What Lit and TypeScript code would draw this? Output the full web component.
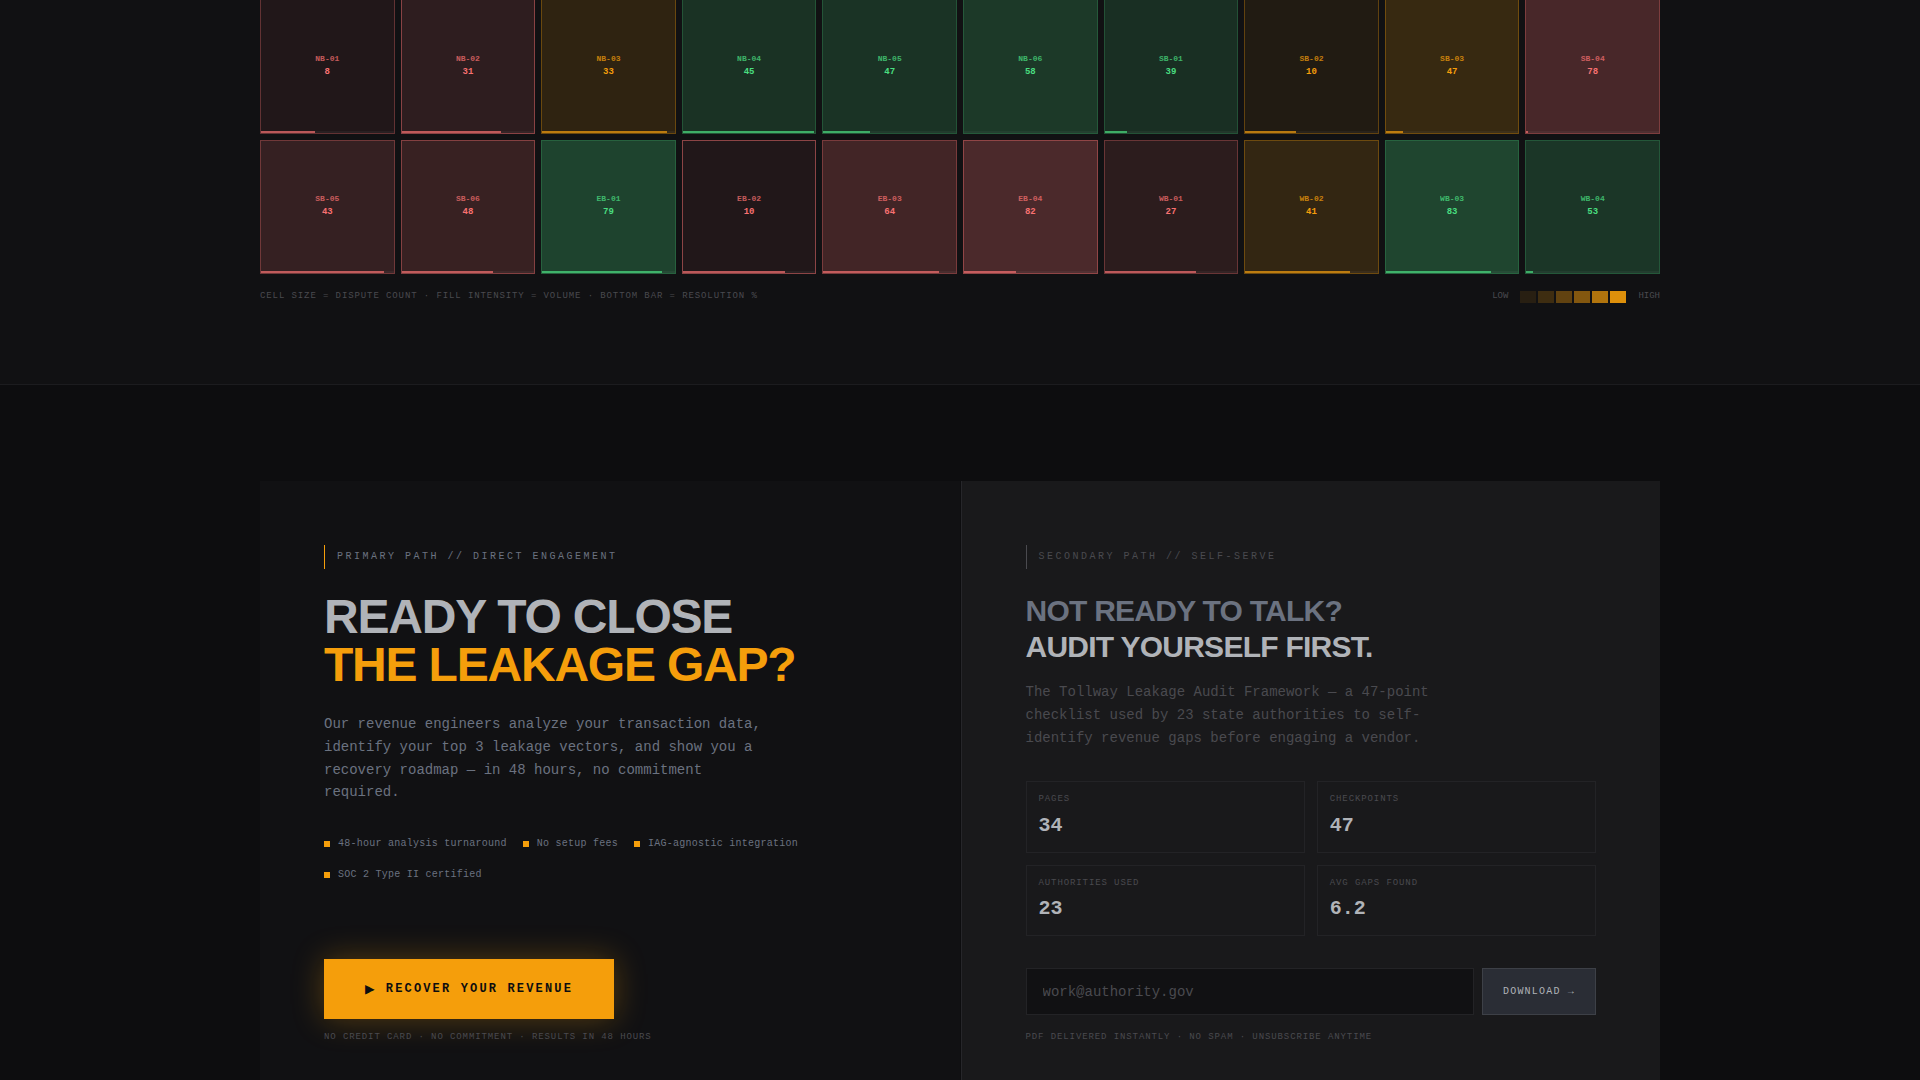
import { LitElement, html, css } from "lit";
import { customElement, property } from "lit/decorators.js";

type Tone = "red" | "amber" | "green";

interface Lane {
  id: string;
  count: number;
  tone: Tone;
  resolved: number;
  edge: number;
}

const RGB: Record<Tone, string> = {
  red: "248, 113, 113",
  amber: "245, 158, 11",
  green: "74, 222, 128",
};

const LANES: Lane[] = [
  { id: "NB-01", count: 8, tone: "red", resolved: 41, edge: 0.3 },
  { id: "NB-02", count: 31, tone: "red", resolved: 75, edge: 0.45 },
  { id: "NB-03", count: 33, tone: "amber", resolved: 94, edge: 0.3 },
  { id: "NB-04", count: 45, tone: "green", resolved: 99, edge: 0.2 },
  { id: "NB-05", count: 47, tone: "green", resolved: 35, edge: 0.2 },
  { id: "NB-06", count: 58, tone: "green", resolved: 0, edge: 0.2 },
  { id: "SB-01", count: 39, tone: "green", resolved: 17, edge: 0.2 },
  { id: "SB-02", count: 10, tone: "amber", resolved: 38, edge: 0.3 },
  { id: "SB-03", count: 47, tone: "amber", resolved: 13, edge: 0.3 },
  { id: "SB-04", count: 78, tone: "red", resolved: 1, edge: 0.3 },
  { id: "SB-05", count: 43, tone: "red", resolved: 93, edge: 0.3 },
  { id: "SB-06", count: 48, tone: "red", resolved: 69, edge: 0.4 },
  { id: "EB-01", count: 79, tone: "green", resolved: 90, edge: 0.2 },
  { id: "EB-02", count: 10, tone: "red", resolved: 77, edge: 0.5 },
  { id: "EB-03", count: 64, tone: "red", resolved: 87, edge: 0.3 },
  { id: "EB-04", count: 82, tone: "red", resolved: 39, edge: 0.4 },
  { id: "WB-01", count: 27, tone: "red", resolved: 69, edge: 0.3 },
  { id: "WB-02", count: 41, tone: "amber", resolved: 79, edge: 0.3 },
  { id: "WB-03", count: 83, tone: "green", resolved: 79, edge: 0.2 },
  { id: "WB-04", count: 53, tone: "green", resolved: 5, edge: 0.2 },
];

const SCALE = [0.1, 0.2, 0.35, 0.5, 0.7, 0.9];

@customElement("lane-cell")
class LaneCell extends LitElement {
  @property({ attribute: false }) lane!: Lane;

  static styles = css`
    :host {
      display: block;
      aspect-ratio: 1;
      min-width: 0;
    }
    .cell {
      box-sizing: border-box;
      height: 100%;
      display: flex;
      flex-direction: column;
      align-items: center;
      justify-content: center;
      position: relative;
      padding-bottom: 1px;
      border: 1px solid;
      font-weight: 700;
      text-align: center;
    }
    .id {
      font-size: 8px;
      line-height: 12px;
      opacity: 0.75;
    }
    .count {
      font-size: 9px;
      line-height: 14px;
    }
    .red {
      color: #f87171;
    }
    .amber {
      color: #f59e0b;
    }
    .green {
      color: #4ade80;
    }
    .track {
      position: absolute;
      left: 0;
      right: 0;
      bottom: 0;
      height: 2px;
      background: rgba(255, 255, 255, 0.04);
    }
    .fill {
      height: 100%;
      background: currentColor;
      opacity: 0.7;
    }
  `;

  render() {
    const { id, count, tone, resolved, edge } = this.lane;
    const rgb = RGB[tone];
    const alpha = 0.05 + count * 0.0025;
    return html`
      <div
        class="cell ${tone}"
        style="background:rgba(${rgb}, ${alpha});border-color:rgba(${rgb}, ${edge})"
      >
        <span class="id">${id}</span>
        <span class="count">${count}</span>
        <div class="track"><div class="fill" style="width:${resolved}%"></div></div>
      </div>
    `;
  }
}

@customElement("app-root")
class AppRoot extends LitElement {
  static styles = css`
    :host {
      display: block;
      min-height: 100vh;
      background: #0d0d0f;
      color: #b0b3b8;
      font-family: "Liberation Mono", monospace;
      -webkit-font-smoothing: antialiased;
    }
    * {
      box-sizing: border-box;
    }
    h2,
    p,
    dl,
    dd,
    ul {
      margin: 0;
      padding: 0;
    }
    .wrap {
      max-width: 1400px;
      margin: 0 auto;
    }
    .heat {
      background: #111113;
      border-bottom: 1px solid #1c1c1f;
      padding-bottom: 81px;
      overflow: hidden;
    }
    .grid {
      display: grid;
      grid-template-columns: repeat(10, minmax(0, 1fr));
      gap: 6px;
      margin-top: -1px;
    }
    .legend {
      display: flex;
      justify-content: space-between;
      align-items: flex-start;
      padding-top: 15px;
      font-size: 9px;
      line-height: 14px;
      color: #4a4a4f;
    }
    .tracked {
      letter-spacing: 0.1em;
    }
    .scale {
      display: flex;
      gap: 12px;
    }
    .swatches {
      display: flex;
      gap: 2px;
      padding-top: 2px;
    }
    .swatch {
      width: 16px;
      height: 12px;
      background: #f59e0b;
    }
    .paths {
      padding: 96px 0;
    }
    .split {
      display: grid;
      grid-template-columns: repeat(2, minmax(0, 1fr));
      gap: 1px;
    }
    .panel {
      display: flex;
      flex-direction: column;
      justify-content: space-between;
      padding: 64px;
      background: #111113;
    }
    .panel.alt {
      background: #19191b;
      border-left: 1px solid #26262a;
    }
    .eyebrow {
      border-left: 1px solid #f59e0b;
      padding: 4px 12px;
      margin-bottom: 24px;
      font-size: 10px;
      line-height: 16px;
      letter-spacing: 0.25em;
      color: #6b7280;
    }
    .alt .eyebrow {
      border-color: #4a4a4f;
      color: #4a4a4f;
    }
    h2 {
      font-family: "Liberation Sans", Arial, sans-serif;
      font-weight: 700;
      font-size: 48px;
      line-height: 48px;
      letter-spacing: -0.025em;
      margin-bottom: 24px;
    }
    h2 span {
      display: block;
    }
    .hot {
      color: #f59e0b;
    }
    .alt h2 {
      font-size: 30px;
      line-height: 36px;
      margin-bottom: 16px;
    }
    .dim {
      color: #6b7280;
    }
    .lead {
      max-width: 448px;
      font-size: 14px;
      line-height: 1.625;
      color: #6b7280;
      margin-bottom: 32px;
    }
    .alt .lead {
      color: #4a4a4f;
    }
    .points {
      display: flex;
      flex-wrap: wrap;
      gap: 16px;
      list-style: none;
      font-size: 10px;
      line-height: 15px;
      letter-spacing: 0.025em;
      color: #6b7280;
    }
    .points li {
      display: flex;
      align-items: center;
      gap: 8px;
    }
    .points li::before {
      content: "";
      width: 6px;
      height: 6px;
      background: #f59e0b;
    }
    button {
      font-family: inherit;
      border-radius: 0;
      cursor: pointer;
      white-space: nowrap;
    }
    .cta {
      display: flex;
      align-items: center;
      gap: 9px;
      height: 60px;
      padding: 0 41px;
      border: 0;
      background: #f59e0b;
      color: #0d0d0f;
      font-size: 12px;
      font-weight: 700;
      letter-spacing: 0.18em;
      box-shadow: 0 0 32px rgba(245, 158, 11, 0.3);
    }
    .play {
      font-size: 16px;
    }
    .note {
      font-size: 9px;
      line-height: 14px;
      letter-spacing: 0.1em;
      color: #4a4a4f;
      margin-top: 11px;
    }
    .alt .note {
      margin-top: 15px;
    }
    .stats {
      display: grid;
      grid-template-columns: repeat(2, minmax(0, 1fr));
      gap: 12px;
      margin-bottom: 32px;
    }
    .stat {
      border: 1px solid #232326;
      padding: 10px 12px 12px;
    }
    dt {
      font-size: 9px;
      line-height: 1.6;
      letter-spacing: 0.1em;
      color: #4a4a4f;
    }
    dd {
      font-size: 20px;
      line-height: 28px;
      font-weight: 700;
      margin-top: 5px;
    }
    .form {
      display: flex;
      gap: 8px;
      height: 47px;
    }
    input {
      flex: 1;
      min-width: 0;
      border: 1px solid #232326;
      border-radius: 0;
      background: #111113;
      color: #b0b3b8;
      padding: 0 16px;
      font: 14px "Liberation Mono", monospace;
    }
    input::placeholder {
      color: #4a4a4f;
      opacity: 1;
    }
    .get {
      border: 1px solid #3d4047;
      background: #2a2d35;
      color: #b0b3b8;
      padding: 0 20px;
      font-size: 10px;
      letter-spacing: 0.12em;
    }
  `;

  render() {
    const points = [
      "48-hour analysis turnaround",
      "No setup fees",
      "IAG-agnostic integration",
      "SOC 2 Type II certified",
    ];
    const stats = [
      ["PAGES", "34"],
      ["CHECKPOINTS", "47"],
      ["AUTHORITIES USED", "23"],
      ["AVG GAPS FOUND", "6.2"],
    ];
    return html`
      <section class="heat">
        <div class="wrap">
          <div class="grid">
            ${LANES.map((lane) => html`<lane-cell .lane=${lane}></lane-cell>`)}
          </div>
          <div class="legend">
            <span class="tracked"
              >CELL SIZE = DISPUTE COUNT · FILL INTENSITY = VOLUME · BOTTOM BAR = RESOLUTION %</span
            >
            <div class="scale">
              <span>LOW</span>
              <div class="swatches">
                ${SCALE.map((o) => html`<div class="swatch" style="opacity:${o}"></div>`)}
              </div>
              <span>HIGH</span>
            </div>
          </div>
        </div>
      </section>

      <section class="paths">
        <div class="wrap split">
          <div class="panel">
            <div>
              <div class="eyebrow">PRIMARY PATH // DIRECT ENGAGEMENT</div>
              <h2><span>READY TO CLOSE</span><span class="hot">THE LEAKAGE GAP?</span></h2>
              <p class="lead">
                Our revenue engineers analyze your transaction data, identify your top 3 leakage
                vectors, and show you a recovery roadmap — in 48 hours, no commitment required.
              </p>
              <ul class="points">
                ${points.map((p) => html`<li>${p}</li>`)}
              </ul>
            </div>
            <div>
              <button class="cta" type="button">
                <span class="play">▶</span><span>RECOVER YOUR REVENUE</span>
              </button>
              <p class="note">NO CREDIT CARD · NO COMMITMENT · RESULTS IN 48 HOURS</p>
            </div>
          </div>

          <div class="panel alt">
            <div>
              <div class="eyebrow">SECONDARY PATH // SELF-SERVE</div>
              <h2><span class="dim">NOT READY TO TALK?</span><span>AUDIT YOURSELF FIRST.</span></h2>
              <p class="lead">
                The Tollway Leakage Audit Framework — a 47-point checklist used by 23 state
                authorities to self-identify revenue gaps before engaging a vendor.
              </p>
              <dl class="stats">
                ${stats.map(
                  ([k, v]) => html`<div class="stat"><dt>${k}</dt><dd>${v}</dd></div>`
                )}
              </dl>
            </div>
            <div>
              <form class="form" @submit=${(e: Event) => e.preventDefault()}>
                <input
                  type="email"
                  name="email"
                  aria-label="Work email"
                  placeholder="work@authority.gov"
                />
                <button class="get" type="submit">DOWNLOAD →</button>
              </form>
              <p class="note">PDF DELIVERED INSTANTLY · NO SPAM · UNSUBSCRIBE ANYTIME</p>
            </div>
          </div>
        </div>
      </section>
    `;
  }
}
